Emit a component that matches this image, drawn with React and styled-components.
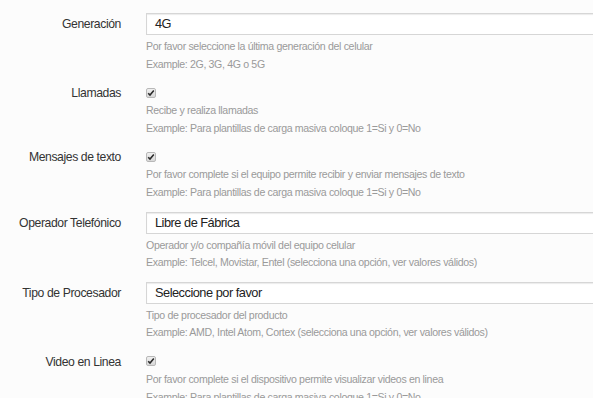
import React from "react";
import styled, { createGlobalStyle } from "styled-components";

const Global = createGlobalStyle`
  html, body { margin: 0; padding: 0; background: #fcfcfc; overflow: hidden; }
  body { font-family: "Liberation Sans", Arial, Helvetica, sans-serif; }
`;

const Form = styled.div`
  width: 640px;
  margin-top: -14px;
  display: flex;
  flex-direction: column;
  gap: 9.5px;
`;

const Row = styled.div`
  display: grid;
  grid-template-columns: 121px 1fr;
  column-gap: 25px;
`;

const Label = styled.div`
  text-align: right;
  font-size: 12.2px;
  letter-spacing: -0.4px;
  color: #333;
  line-height: ${(p) => (p.$input ? "22px" : "20px")};
`;

const Field = styled.div`
  display: flex;
  flex-direction: column;
`;

const Input = styled.div`
  box-sizing: border-box;
  height: 22px;
  margin-bottom: 3px;
  border: 1px solid #d6d6d6;
  background: #fff;
  box-shadow: inset 0 1px 1px rgba(0, 0, 0, 0.08);
  padding: 0 8px;
  font-size: 12.8px;
  letter-spacing: -0.5px;
  line-height: 20px;
  color: #222;
`;

const CheckLine = styled.div`
  height: 19px;
  display: flex;
  align-items: center;
`;

const Box = styled.span`
  box-sizing: border-box;
  width: 10px;
  height: 10px;
  border: 1px solid #b8b8b8;
  border-radius: 2px;
  background: linear-gradient(#f0f0f0, #d8d8d8);
  display: flex;
  align-items: center;
  justify-content: center;
`;

const Help = styled.div`
  font-size: 10.6px;
  letter-spacing: -0.35px;
  line-height: 17.8px;
  color: #9a9a9a;
  white-space: nowrap;
`;

const Check = () => (
  <Box>
    <svg width="8" height="8" viewBox="0 0 8 8">
      <path d="M1.2 4.2 L3 6 L6.8 1.6" fill="none" stroke="#2a2a2a" strokeWidth="1.6" />
    </svg>
  </Box>
);

const rows = [
  {
    label: "Generación",
    type: "input",
    value: "4G",
    help: ["Por favor seleccione la última generación del celular", "Example: 2G, 3G, 4G o 5G"],
  },
  {
    label: "Llamadas",
    type: "check",
    help: ["Recibe y realiza llamadas", "Example: Para plantillas de carga masiva coloque 1=Si y 0=No"],
  },
  {
    label: "Mensajes de texto",
    type: "check",
    help: [
      "Por favor complete si el equipo permite recibir y enviar mensajes de texto",
      "Example: Para plantillas de carga masiva coloque 1=Si y 0=No",
    ],
  },
  {
    label: "Operador Telefónico",
    type: "input",
    value: "Libre de Fábrica",
    help: [
      "Operador y/o compañía móvil del equipo celular",
      "Example: Telcel, Movistar, Entel (selecciona una opción, ver valores válidos)",
    ],
  },
  {
    label: "Tipo de Procesador",
    type: "input",
    value: "Seleccione por favor",
    help: [
      "Tipo de procesador del producto",
      "Example: AMD, Intel Atom, Cortex (selecciona una opción, ver valores válidos)",
    ],
  },
  {
    label: "Video en Linea",
    type: "check",
    help: [
      "Por favor complete si el dispositivo permite visualizar videos en linea",
      "Example: Para plantillas de carga masiva coloque 1=Si y 0=No",
    ],
  },
];

export default function App() {
  return (
    <>
      <Global />
      <Form>
        <Row>
          <span />
          <Field>
            <Help>Example: Apple, Samsung, Huawei, Motorola (selecciona una opción, ver valores válidos)</Help>
          </Field>
        </Row>
        {rows.map((r) => (
          <Row key={r.label}>
            <Label $input={r.type === "input"}>{r.label}</Label>
            <Field>
              {r.type === "input" ? (
                <Input>{r.value}</Input>
              ) : (
                <CheckLine>
                  <Check />
                </CheckLine>
              )}
              {r.help.map((h) => (
                <Help key={h}>{h}</Help>
              ))}
            </Field>
          </Row>
        ))}
      </Form>
    </>
  );
}
